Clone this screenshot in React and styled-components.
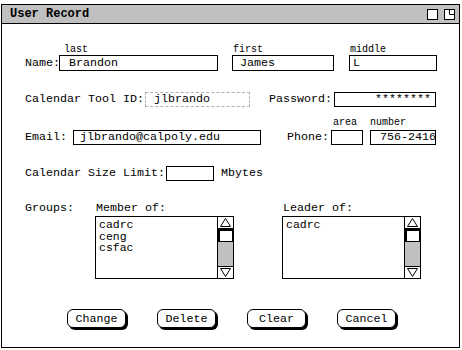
import React from "react";
import styled, { createGlobalStyle } from "styled-components";

const Global = createGlobalStyle`
  html, body { margin: 0; padding: 0; background: #fff; }
  body { font-family: "Liberation Mono", "DejaVu Sans Mono", monospace; color: #000; }
`;

const MONO = `"Liberation Mono", "DejaVu Sans Mono", monospace`;

const Window = styled.div`
  box-sizing: border-box;
  width: 459px;
  height: 344px;
  margin: 4px 0 0 1px;
  border: 1px solid #000;
  display: flex;
  flex-direction: column;
  background: #fff;
`;

const TitleBar = styled.div`
  height: 18px;
  border-bottom: 1px solid #000;
  background: #c0c0c0;
  display: flex;
  align-items: center;
  padding: 0 4px 0 8px;
  gap: 6px;
`;

const Title = styled.div`
  flex: 1;
  font: bold 12px/18px ${MONO};
`;

const Content = styled.div`
  display: flex;
  flex-direction: column;
  padding-left: 23px;
`;

const Row = styled.div`
  display: flex;
  align-items: flex-end;
  margin-top: ${(p) => p.$mt || 0}px;
`;

const Label = styled.div`
  width: ${(p) => (p.$w ? `${p.$w}px` : "auto")};
  margin-left: ${(p) => p.$ml || 0}px;
  height: ${(p) => p.$h}px;
  font: 11.67px/${(p) => p.$h}px ${MONO};
  white-space: pre;
  flex-shrink: 0;
`;

const Field = styled.div`
  display: flex;
  flex-direction: column;
  margin-left: ${(p) => p.$ml || 0}px;
  flex-shrink: 0;
`;

const SmallLabel = styled.div`
  font: 10px/10px ${MONO};
  height: 10px;
  padding-left: ${(p) => p.$pl || 0}px;
  margin-bottom: ${(p) => p.$mb || 0}px;
  white-space: pre;
`;

const Box = styled.div`
  box-sizing: border-box;
  width: ${(p) => p.$w}px;
  height: ${(p) => p.$h}px;
  margin-left: ${(p) => p.$ml || 0}px;
  border: 1px ${(p) => (p.$dashed ? "dashed #b0b0b0" : "solid #000")};
  padding: 0 ${(p) => p.$pr || 0}px 0 ${(p) => p.$pl || 0}px;
  font: 11.67px/${(p) => p.$h - 2}px ${MONO};
  text-align: ${(p) => p.$align || "left"};
  white-space: pre;
  overflow: hidden;
  flex-shrink: 0;
`;

const GroupsRow = styled.div`
  display: flex;
  align-items: flex-start;
  margin-top: 21px;
`;

const ListColumn = styled.div`
  display: flex;
  flex-direction: column;
  margin-left: ${(p) => p.$ml || 0}px;
`;

const ListLabel = styled.div`
  width: ${(p) => (p.$w ? `${p.$w}px` : "auto")};
  font: 11.67px/12px ${MONO};
  padding-left: ${(p) => p.$pl || 0}px;
  margin-bottom: 2px;
`;

const ListBox = styled.div`
  box-sizing: border-box;
  width: 139px;
  height: 63px;
  border: 1px solid #000;
  display: flex;
`;

const ListItems = styled.div`
  flex: 1;
  padding: 2px 0 0 3px;
  font: 11px/11.5px ${MONO};
`;

const Item = styled.div`
  height: 11.5px;
  font-size: 11.5px;
  line-height: 11.5px;
`;

const Scrollbar = styled.div`
  width: 15px;
  border-left: 1px solid #000;
  display: flex;
  flex-direction: column;
`;

const ArrowCell = styled.div`
  height: 11px;
  display: flex;
  align-items: center;
  justify-content: center;
  ${(p) => (p.$down ? "border-top: 1px solid #000;" : "border-bottom: 1px solid #000;")}
`;

const Thumb = styled.div`
  box-sizing: border-box;
  height: 13px;
  border: 1px solid #000;
  background: #fff;
  box-shadow: inset 1px 1px 0 #000;
`;

const Track = styled.div`
  flex: 1;
  background: #c0c0c0;
`;

const ButtonRow = styled.div`
  display: flex;
  gap: 31px;
  margin-top: 30px;
  padding-left: 42px;
`;

const Button = styled.div`
  box-sizing: border-box;
  width: 59px;
  height: 19px;
  border: 1px solid #000;
  border-radius: 6px;
  box-shadow: 2px 2px 0 #000;
  background: #fff;
  display: flex;
  align-items: center;
  justify-content: center;
  font: 11.67px/17px ${MONO};
  padding-top: 1px;
`;

const Up = () => (
  <svg width="11" height="9" viewBox="0 0 11 9">
    <polygon points="5.5,0.5 10.5,8.5 0.5,8.5" fill="#fff" stroke="#000" strokeWidth="1" />
  </svg>
);
const Down = () => (
  <svg width="11" height="9" viewBox="0 0 11 9">
    <polygon points="0.5,0.5 10.5,0.5 5.5,8.5" fill="#fff" stroke="#000" strokeWidth="1" />
  </svg>
);

const List = ({ items }) => (
  <ListBox>
    <ListItems>
      {items.map((i) => (
        <Item key={i}>{i}</Item>
      ))}
    </ListItems>
    <Scrollbar>
      <ArrowCell>
        <Up />
      </ArrowCell>
      <Thumb />
      <Track />
      <ArrowCell $down>
        <Down />
      </ArrowCell>
    </Scrollbar>
  </ListBox>
);

export default function App() {
  return (
    <>
      <Global />
      <Window>
        <TitleBar>
          <Title>User Record</Title>
          <svg width="11" height="11" viewBox="0 0 11 11">
            <rect x="0.5" y="0.5" width="10" height="10" fill="#fff" stroke="#000" />
          </svg>
          <svg width="11" height="11" viewBox="0 0 11 11">
            <rect x="0.5" y="0.5" width="10" height="10" fill="#fff" stroke="#000" />
            <path d="M5.5 0.5 V5.5 H10.5" fill="none" stroke="#000" />
          </svg>
        </TitleBar>
        <Content>
          <Row $mt={21}>
            <Label $w={34} $h={16}>Name:</Label>
            <Field>
              <SmallLabel $pl={5}>last</SmallLabel>
              <Box $w={159} $h={16} $pl={9}>Brandon</Box>
            </Field>
            <Field $ml={14}>
              <SmallLabel $pl={1}>first</SmallLabel>
              <Box $w={102} $h={16} $pl={7}>James</Box>
            </Field>
            <Field $ml={15}>
              <SmallLabel $pl={1}>middle</SmallLabel>
              <Box $w={88} $h={16} $pl={3}>L</Box>
            </Field>
          </Row>

          <Row $mt={21}>
            <Label $w={120} $h={15}>Calendar Tool ID:</Label>
            <Box $w={105} $h={15} $pl={8} $dashed>jlbrando</Box>
            <Label $w={65} $ml={19} $h={15}>Password:</Label>
            <Box $w={102} $h={15} $pr={4} $align="right">********</Box>
          </Row>

          <Row $mt={11}>
            <Label $w={48} $h={15}>Email:</Label>
            <Box $w={188} $h={15} $pl={6}>jlbrando@calpoly.edu</Box>
            <Label $w={44} $ml={26} $h={15}>Phone:</Label>
            <Field>
              <SmallLabel $pl={2} $mb={2}>area</SmallLabel>
              <Box $w={32} $h={15}></Box>
            </Field>
            <Field $ml={7}>
              <SmallLabel $pl={0} $mb={2}>number</SmallLabel>
              <Box $w={66} $h={15} $pl={9}>756-2416</Box>
            </Field>
          </Row>

          <Row $mt={21}>
            <Label $w={141} $h={15}>Calendar Size Limit:</Label>
            <Box $w={48} $h={15}></Box>
            <Label $ml={7} $h={15}>Mbytes</Label>
          </Row>

          <GroupsRow>
            <ListLabel $w={70}>Groups:</ListLabel>
            <ListColumn>
              <ListLabel $pl={1}>Member of:</ListLabel>
              <List items={["cadrc", "ceng", "csfac"]} />
            </ListColumn>
            <ListColumn $ml={48}>
              <ListLabel $pl={1}>Leader of:</ListLabel>
              <List items={["cadrc"]} />
            </ListColumn>
          </GroupsRow>

          <ButtonRow>
            <Button>Change</Button>
            <Button>Delete</Button>
            <Button>Clear</Button>
            <Button>Cancel</Button>
          </ButtonRow>
        </Content>
      </Window>
    </>
  );
}
